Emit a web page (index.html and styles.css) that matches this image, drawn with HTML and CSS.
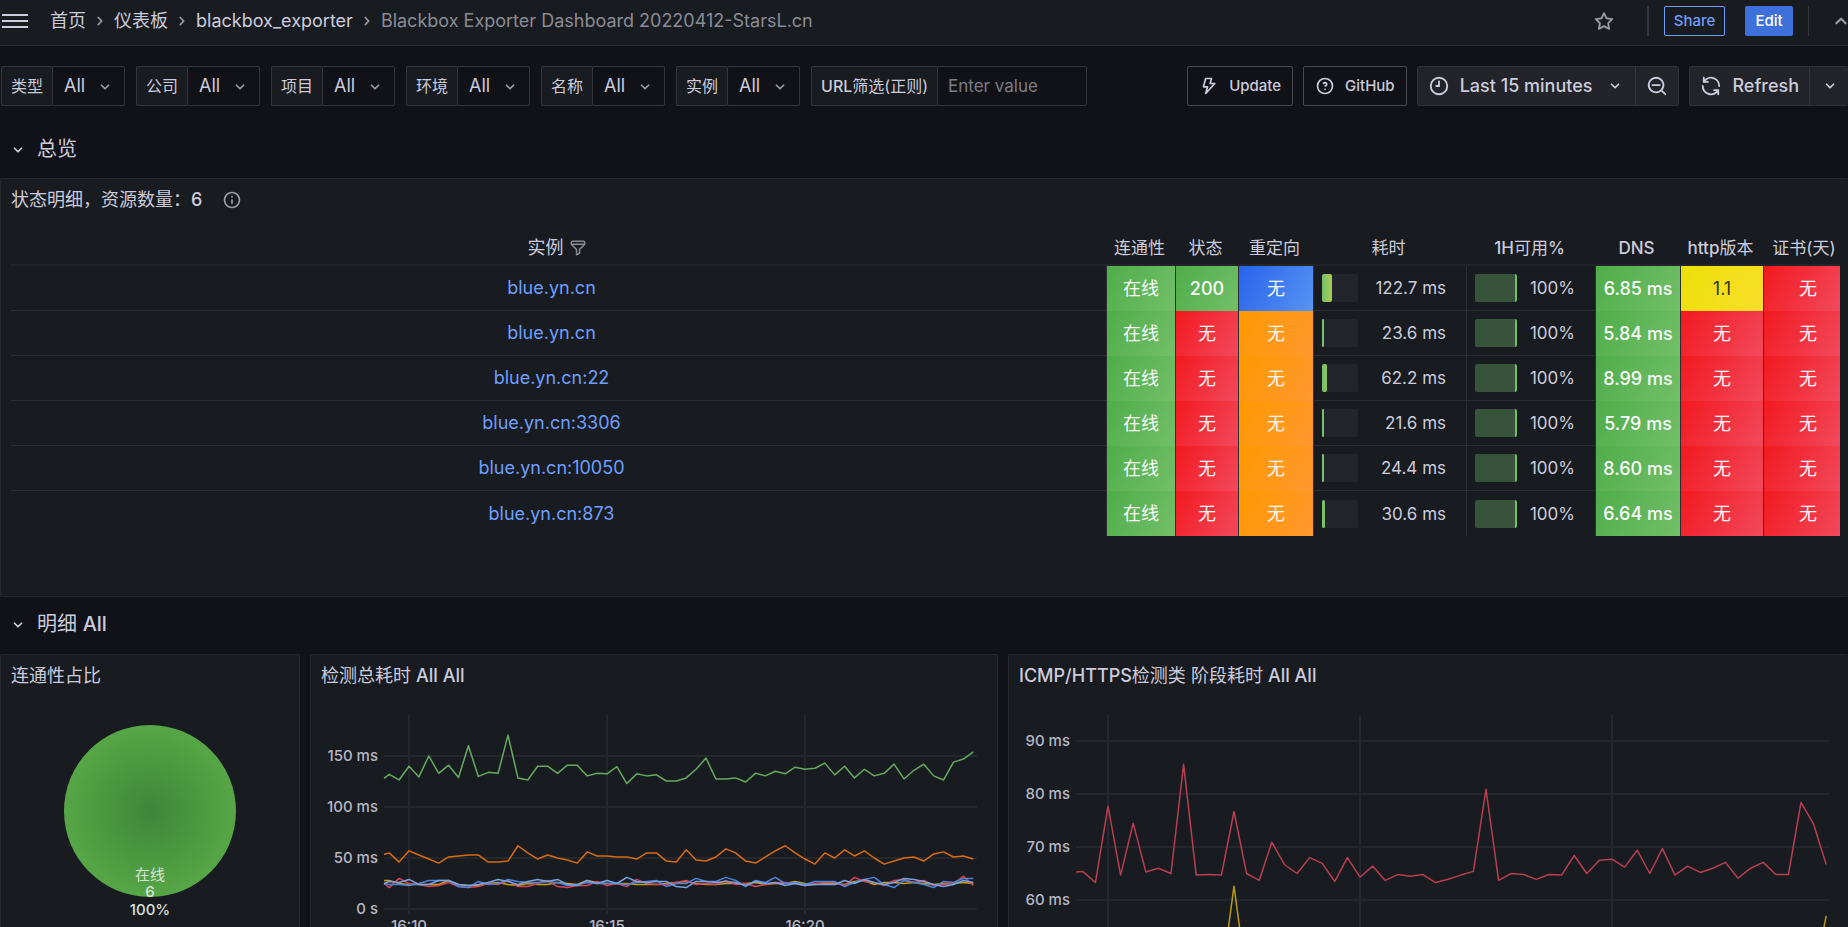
FILE: index.html
```html
<!DOCTYPE html>
<html lang="zh-CN">
<head>
  <meta charset="UTF-8">
  <meta name="viewport" content="width=device-width, initial-scale=1.0">
  <title>Blackbox Exporter Dashboard</title>
  <link rel="stylesheet" href="styles.css">
</head>
<body>
  <svg class="sprite" aria-hidden="true">
    <symbol id="i-down" viewBox="0 0 24 24"><path d="M17,9.17a1,1,0,0,0-1.41,0L12,12.71,8.46,9.17a1,1,0,0,0-1.41,0,1,1,0,0,0,0,1.42l4.24,4.24a1,1,0,0,0,1.42,0L17,10.59A1,1,0,0,0,17,9.17Z"/></symbol>
    <symbol id="i-right" viewBox="0 0 24 24"><path d="M14.83,11.29,10.59,7.05a1,1,0,0,0-1.42,0,1,1,0,0,0,0,1.41L12.71,12,9.17,15.54a1,1,0,0,0,0,1.41,1,1,0,0,0,1.42,0l4.24-4.24A1,1,0,0,0,14.83,11.29Z"/></symbol>
    <symbol id="i-star" viewBox="0 0 24 24"><path d="M22,9.67A1,1,0,0,0,21.14,9l-5.69-.83L12.9,3a1,1,0,0,0-1.8,0L8.55,8.16,2.86,9a1,1,0,0,0-.81.68,1,1,0,0,0,.25,1l4.13,4-1,5.68A1,1,0,0,0,6.9,21.44L12,18.77l5.1,2.67a.93.93,0,0,0,.46.12,1,1,0,0,0,.59-.19,1,1,0,0,0,.4-1l-1-5.68,4.13-4A1,1,0,0,0,22,9.67Zm-6.15,4a1,1,0,0,0-.29.88l.72,4.2-3.76-2a1.06,1.06,0,0,0-.94,0l-3.76,2,.72-4.2a1,1,0,0,0-.29-.88l-3-3,4.21-.61a1,1,0,0,0,.76-.55L12,5.7l1.88,3.82a1,1,0,0,0,.76.55l4.21.61Z"/></symbol>
    <symbol id="i-bolt" viewBox="0 0 24 24"><path d="M8 3h7l-1.600 6H19L8.100 21l2.100-8H5.300Z" fill="none" stroke="currentColor" stroke-width="2" stroke-linejoin="round"/></symbol>
    <symbol id="i-question" viewBox="0 0 24 24"><path d="M11.29,15.29a1.58,1.58,0,0,0-.12.15.76.76,0,0,0-.09.18.64.64,0,0,0-.06.18,1.36,1.36,0,0,0,0,.2.84.84,0,0,0,.08.38.9.9,0,0,0,.54.54.94.94,0,0,0,.76,0,.9.9,0,0,0,.54-.54A1,1,0,0,0,13,16a1,1,0,0,0-.29-.71A1,1,0,0,0,11.29,15.29ZM12,2A10,10,0,1,0,22,12,10,10,0,0,0,12,2Zm0,18a8,8,0,1,1,8-8A8,8,0,0,1,12,20ZM12,7A3,3,0,0,0,9.4,8.5a1,1,0,1,0,1.73,1A1,1,0,0,1,12,9a1,1,0,0,1,0,2,1,1,0,1,0,0,2,3,3,0,0,0,0-6Z"/></symbol>
    <symbol id="i-clock" viewBox="0 0 24 24"><g fill="none" stroke="currentColor" stroke-width="2" stroke-linecap="round"><circle cx="12" cy="12" r="9"/><path d="M12 7v5H9"/></g></symbol>
    <symbol id="i-zoomout" viewBox="0 0 24 24"><path d="M21.71,20.29,18,16.61A9,9,0,1,0,16.61,18l3.68,3.68a1,1,0,0,0,1.42,0A1,1,0,0,0,21.71,20.29ZM11,18a7,7,0,1,1,7-7A7,7,0,0,1,11,18Zm4-8H7a1,1,0,0,0,0,2h8a1,1,0,0,0,0-2Z"/></symbol>
    <symbol id="i-sync" viewBox="0 0 24 24"><path d="M19.91,15.51H15.38a1,1,0,0,0,0,2h2.4A8,8,0,0,1,4,12a1,1,0,1,0-2,0,10,10,0,0,0,16.88,7.23V21a1,1,0,0,0,2,0V16.5A1,1,0,0,0,19.91,15.51ZM12,2A10,10,0,0,0,5.12,4.77V3a1,1,0,0,0-2,0V7.5a1,1,0,0,0,1,1h4.5a1,1,0,0,0,0-2H6.22A8,8,0,0,1,20,12a1,1,0,0,0,2,0A10,10,0,0,0,12,2Z"/></symbol>
    <symbol id="i-info" viewBox="0 0 24 24"><path d="M12,2A10,10,0,1,0,22,12,10,10,0,0,0,12,2Zm0,18a8,8,0,1,1,8-8A8,8,0,0,1,12,20Zm0-9a1,1,0,0,0-1,1v4a1,1,0,0,0,2,0V12A1,1,0,0,0,12,11Zm0-4a1.200,1.200,0,1,0,1.200,1.200A1.200,1.200,0,0,0,12,7Z"/></symbol>
    <symbol id="i-filter" viewBox="0 0 24 24"><path d="M19,2H5A3,3,0,0,0,2,5V6.17a3,3,0,0,0,.25,1.2l0,.06a2.81,2.81,0,0,0,.59.86L9,14.41V21a1,1,0,0,0,.47.85A1,1,0,0,0,10,22a1,1,0,0,0,.45-.11l4-2A1,1,0,0,0,15,19V14.41l6.12-6.12a2.81,2.81,0,0,0,.59-.86l0-.06A3,3,0,0,0,22,6.17V5A3,3,0,0,0,19,2ZM13.29,13.29A1,1,0,0,0,13,14v4.38l-2,1V14a1,1,0,0,0-.29-.71L5.41,8H18.59ZM20,6H4V5A1,1,0,0,1,5,4H19a1,1,0,0,1,1,1Z"/></symbol>
  </svg>

  <header class="topbar">
    <button class="menu" aria-label="Menu"><span></span><span></span><span></span></button>
    <nav class="crumbs">
      <a href="#">首页</a>
      <svg class="icon sep"><use href="#i-right"/></svg>
      <a href="#">仪表板</a>
      <svg class="icon sep"><use href="#i-right"/></svg>
      <a href="#">blackbox_exporter</a>
      <svg class="icon sep"><use href="#i-right"/></svg>
      <span class="current">Blackbox Exporter Dashboard 20220412-StarsL.cn</span>
    </nav>
    <div class="actions">
      <button class="star" aria-label="Star"><svg class="icon"><use href="#i-star"/></svg></button>
      <span class="divider wide"></span>
      <button class="share">Share</button>
      <button class="edit">Edit</button>
      <span class="divider"></span>
      <button class="collapse" aria-label="Collapse"><svg class="icon"><use href="#i-down"/></svg></button>
    </div>
  </header>

  <div class="controls">
    <div class="var"><label for="v1">类型</label><div class="pick"><select id="v1"><option>All</option></select><svg class="icon"><use href="#i-down"/></svg></div></div>
    <div class="var"><label for="v2">公司</label><div class="pick"><select id="v2"><option>All</option></select><svg class="icon"><use href="#i-down"/></svg></div></div>
    <div class="var"><label for="v3">项目</label><div class="pick"><select id="v3"><option>All</option></select><svg class="icon"><use href="#i-down"/></svg></div></div>
    <div class="var"><label for="v4">环境</label><div class="pick"><select id="v4"><option>All</option></select><svg class="icon"><use href="#i-down"/></svg></div></div>
    <div class="var"><label for="v5">名称</label><div class="pick"><select id="v5"><option>All</option></select><svg class="icon"><use href="#i-down"/></svg></div></div>
    <div class="var"><label for="v6">实例</label><div class="pick"><select id="v6"><option>All</option></select><svg class="icon"><use href="#i-down"/></svg></div></div>
    <div class="var"><label for="url"><b>URL</b>筛选(正则)</label><input type="text" id="url" placeholder="Enter value"></div>

    <div class="tools">
      <a class="link-btn" href="#"><svg class="icon"><use href="#i-bolt"/></svg>Update</a>
      <a class="link-btn" href="#"><svg class="icon"><use href="#i-question"/></svg>GitHub</a>
      <div class="group">
        <button class="time"><svg class="icon big"><use href="#i-clock"/></svg>Last 15 minutes<svg class="icon caret"><use href="#i-down"/></svg></button>
        <button class="zoom" aria-label="Zoom out"><svg class="icon big"><use href="#i-zoomout"/></svg></button>
      </div>
      <div class="group last">
        <button class="refresh"><svg class="icon big"><use href="#i-sync"/></svg>Refresh</button>
        <button class="interval" aria-label="Interval"><svg class="icon"><use href="#i-down"/></svg></button>
      </div>
    </div>
  </div>

  <main>
    <h2 class="row-title"><svg class="icon"><use href="#i-down"/></svg>总览</h2>

    <section class="panel overview">
      <h3>状态明细，资源数量：<b>6</b><svg class="icon info"><use href="#i-info"/></svg></h3>
      <table>
        <colgroup>
          <col><col class="c-conn"><col class="c-code"><col class="c-redir"><col class="c-time"><col class="c-avail"><col class="c-dns"><col class="c-http"><col class="c-cert">
        </colgroup>
        <thead>
          <tr>
            <th class="first">实例<svg class="icon"><use href="#i-filter"/></svg></th>
            <th>连通性</th>
            <th>状态</th>
            <th>重定向</th>
            <th>耗时</th>
            <th><b>1H</b>可用<b>%</b></th>
            <th><b>DNS</b></th>
            <th><b>http</b>版本</th>
            <th class="cert">证书(天)</th>
          </tr>
        </thead>
        <tbody id="rows"></tbody>
      </table>
    </section>

    <h2 class="row-title"><svg class="icon"><use href="#i-down"/></svg><span>明细 <b>All</b></span></h2>

    <div class="grid">
      <section class="panel">
        <h3>连通性占比</h3>
        <svg class="chart" viewBox="0 0 298 280">
          <defs>
            <radialGradient id="pie"><stop offset="0" stop-color="#3f8639"/><stop offset="1" stop-color="#56a646"/></radialGradient>
          </defs>
          <circle cx="149" cy="111" r="86" fill="url(#pie)"/>
          <g class="pie-label">
            <text class="zh" x="149" y="180">在线</text>
            <text x="149" y="197">6</text>
            <text x="149" y="215">100%</text>
          </g>
        </svg>
      </section>
      <section class="panel">
        <h3><span>检测总耗时 <b>All All</b></span></h3>
        <svg class="chart" id="total" viewBox="0 0 686 280"></svg>
      </section>
      <section class="panel edge">
        <h3><span><b>ICMP/HTTPS</b>检测类 阶段耗时 <b>All All</b></span></h3>
        <svg class="chart" id="phase" viewBox="0 0 839 280"></svg>
      </section>
    </div>
  </main>

  <script src="dashboard.js"></script>
</body>
</html>
```
FILE: styles.css
```css
* {
  box-sizing: border-box;
}
body {
  margin: 0;
  height: 100vh;
  overflow: hidden;
  background: #111217;
  color: #ccccdc;
  font-family: Inter, "Noto Sans CJK SC", sans-serif;
  font-size: 18px;
  line-height: 24px;
}
button, input, select {
  font: inherit;
  color: inherit;
  margin: 0;
  padding: 0;
  border: 0;
  background: none;
}
a {
  color: inherit;
  text-decoration: none;
}
h2, h3 {
  margin: 0;
  font-weight: 400;
}
b {
  font-weight: 500;
}
.sprite {
  display: none;
}
.icon {
  width: 20px;
  height: 20px;
  flex: none;
  fill: currentColor;
}
.icon.big {
  width: 22px;
  height: 22px;
}

/* top bar */
.topbar {
  display: flex;
  align-items: center;
  height: 46px;
  padding: 0 0 4px 2px;
  background: #181b1f;
  border-bottom: 1px solid #2c2e33;
}
.menu {
  display: flex;
  flex-direction: column;
  gap: 4px;
  width: 26px;
  margin-right: 22px;
}
.menu span {
  height: 2px;
  background: #ccccdc;
}
.crumbs {
  display: flex;
  align-items: center;
}
.crumbs .sep {
  margin: 0 4px;
  color: #9a9ba5;
}
.current {
  color: #8a8b95;
}
.actions {
  display: flex;
  align-items: center;
  margin-left: auto;
  margin-right: -6px;
}
.star {
  display: flex;
  color: #9a9ba5;
  margin-right: 32px;
}
.star .icon {
  width: 22px;
  height: 22px;
}
.divider {
  width: 1px;
  height: 30px;
  background: #35373d;
}
.divider.wide {
  width: 2px;
}
.share, .edit {
  height: 30px;
  font-size: 15px;
  font-weight: 500;
  border-radius: 2px;
}
.share {
  width: 61px;
  margin: 0 20px 0 15px;
  border: 1px solid #6e9fff;
  color: #6e9fff;
}
.edit {
  width: 48px;
  margin-right: 15px;
  background: #3d71d9;
  color: #fff;
}
.collapse {
  display: flex;
  margin-left: 19px;
  color: #9a9ba5;
}
.collapse .icon {
  width: 26px;
  height: 26px;
  transform: rotate(180deg);
}

/* variables and time tools */
.controls {
  display: flex;
  gap: 11px;
  padding: 20px 0 20px 1px;
}
.var {
  display: flex;
  height: 40px;
}
.var label {
  padding: 0 9px;
  line-height: 38px;
  font-size: 16px;
  white-space: nowrap;
  background: #181b1f;
  border: 1px solid #35363c;
  border-right: 0;
  border-radius: 2px 0 0 2px;
}
.var select, .var input {
  height: 40px;
  border: 1px solid #35363c;
  border-radius: 2px;
}
.var select {
  width: 73px;
  padding-left: 11px;
  appearance: none;
}
.var input {
  width: 150px;
  padding-left: 10px;
  font-size: 17px;
}
.var input::placeholder {
  color: #7b7c86;
  opacity: 1;
}
.pick {
  position: relative;
}
.pick .icon {
  position: absolute;
  right: 10px;
  top: 11px;
  color: #9a9ba5;
  pointer-events: none;
}
.tools {
  display: flex;
  gap: 10px;
  margin-left: auto;
}
.link-btn {
  display: flex;
  align-items: center;
  gap: 10px;
  height: 40px;
  padding: 0 11px;
  border: 1px solid #48494f;
  border-radius: 2px;
  font-size: 15px;
  font-weight: 500;
}
.group {
  display: flex;
  height: 40px;
  font-weight: 500;
  background: #222429;
  border: 1px solid #2f3036;
  border-radius: 2px;
}
.group button {
  display: flex;
  align-items: center;
}
.time, .refresh {
  padding: 0 10px;
  gap: 10px;
}
.time .caret {
  margin-left: 3px;
}
.zoom, .interval {
  padding: 0 10px;
  border-left: 1px solid #35363c;
}
.group.last {
  border-right: 0;
}
.interval {
  padding-right: 8px;
}

/* dashboard rows */
.row-title {
  display: flex;
  align-items: center;
  gap: 9px;
  height: 46px;
  padding-left: 8px;
  font-size: 20px;
}
.row-title .icon {
  margin-top: 2px;
}
.panel {
  min-width: 0;
  background: #181b1f;
  border: 1px solid #25272c;
  border-radius: 2px;
}
.panel h3 {
  display: flex;
  align-items: center;
  height: 42px;
  padding-left: 10px;
  font-size: 18px;
  white-space: nowrap;
}
.info {
  margin-left: 20px;
  color: #9a9ba5;
}
.overview {
  border-right: 0;
  margin-top: 6px;
  margin-bottom: 4px;
  padding: 0 8px 60px 0;
}
.overview h3 {
  margin-bottom: 9px;
}

/* status table */
table {
  width: calc(100% - 10px);
  margin-left: 10px;
  table-layout: fixed;
  border-spacing: 0;
  text-align: center;
}
.c-conn { width: 69px; }
.c-code { width: 63px; }
.c-redir { width: 75px; }
.c-time { width: 153px; }
.c-avail { width: 129px; }
.c-dns { width: 85px; }
.c-http { width: 83px; }
.c-cert { width: 76px; }
th {
  height: 36px;
  padding: 2px 10px 0 6px;
  font-size: 17px;
  font-weight: 400;
  white-space: nowrap;
  border-bottom: 2px solid #222429;
}
th.first {
  font-size: 18px;
}
th.cert {
  padding: 2px 0 0 4px;
}
th .icon {
  width: 18px;
  height: 18px;
  margin-left: 5px;
  vertical-align: -3px;
  color: #8a8b95;
}
td {
  height: 45px;
  padding: 0;
  border-right: 1px solid #2c2e33;
  border-bottom: 1px solid #2c2e33;
}
td:last-child {
  padding-left: 12px;
  border-right: 0;
}
tr:last-child td {
  border-bottom: 0;
}
td a {
  margin-right: 14px;
  color: #6e9fff;
}
td.fill {
  border-bottom: 0;
  color: #f7f8fa;
}
td.num {
  font-weight: 500;
}
.green { background: linear-gradient(120deg, #4fad4a, #73bf69); }
.red { background: linear-gradient(120deg, #f2191f, #f2495c); }
.orange { background: linear-gradient(120deg, #ff9900, #ff9830); }
.blue { background: linear-gradient(120deg, #2763eb, #5794f2); }
td.yellow {
  background: linear-gradient(120deg, #ece009, #fade2a);
  color: #33342c;
}
.gauge {
  display: flex;
  align-items: center;
  justify-content: space-between;
  padding: 0 20px 0 8px;
  font-size: 17px;
}
.track {
  width: 36px;
  height: 28px;
  border-radius: 2px;
  background: #22252b;
}
.bar {
  height: 28px;
  border-radius: 2px;
  background: linear-gradient(90deg, #73bf69, #b5d04e) left / 12px;
}
.full {
  width: 42px;
  height: 28px;
  border-radius: 2px;
  border-right: 2px solid #73bf69;
  background: #37543a;
}

/* charts */
.grid {
  display: grid;
  grid-template-columns: 300fr 688fr 840fr;
  gap: 10px;
  margin-top: 7px;
}
.grid .panel.edge {
  border-right: 0;
}
.chart {
  display: block;
  width: 100%;
  margin-top: 3px;
}
.pie-label {
  font-size: 15px;
  font-weight: 500;
  text-anchor: middle;
  fill: #d8e2d8;
}
.zh {
  font-weight: 400;
}
.axis {
  font-size: 15px;
  font-weight: 500;
  fill: #b6b7c5;
}
.y-label { text-anchor: end; }
.x-label { text-anchor: middle; }
.gridline {
  stroke: #24272b;
  stroke-width: 2;
}
.series {
  fill: none;
  stroke-width: 1.5;
  stroke-linejoin: round;
}
```
FILE: dashboard.js
```js
// name, status code, redirect, latency, bar px, dns, http version
const targets = [
  ["blue.yn.cn", "200", "blue", "122.7 ms", 10, "6.85 ms", "1.1"],
  ["blue.yn.cn", "无", "orange", "23.6 ms", 2, "5.84 ms", "无"],
  ["blue.yn.cn:22", "无", "orange", "62.2 ms", 5, "8.99 ms", "无"],
  ["blue.yn.cn:3306", "无", "orange", "21.6 ms", 2, "5.79 ms", "无"],
  ["blue.yn.cn:10050", "无", "orange", "24.4 ms", 2, "8.60 ms", "无"],
  ["blue.yn.cn:873", "无", "orange", "30.6 ms", 3, "6.64 ms", "无"]
];

document.getElementById("rows").innerHTML = targets.map(([name, code, redirect, time, bar, dns, http]) => `
  <tr>
    <td><a href="#">${name}</a></td>
    <td class="fill green">在线</td>
    <td class="fill ${code === "无" ? "red" : "green num"}">${code}</td>
    <td class="fill ${redirect}">无</td>
    <td><div class="gauge"><div class="track"><div class="bar" style="width: ${bar}px"></div></div>${time}</div></td>
    <td><div class="gauge"><div class="full"></div>100%</div></td>
    <td class="fill green num">${dns}</td>
    <td class="fill ${http === "无" ? "red" : "yellow"}">${http}</td>
    <td class="fill red">无</td>
  </tr>`).join("");

function draw(id, o) {
  const y = v => o.base - (v - o.min) * o.scale;
  // the fourth sample falls on 16:10
  const x = i => Math.max(o.left, o.ticks[0] + (i - 3) * o.step);
  let out = "";
  for (const t of o.ticks) {
    out += `<line class="gridline" x1="${t}" x2="${t}" y1="15" y2="${o.bottom}"/>`;
  }
  for (const [v, label] of o.labels) {
    out += `<line class="gridline" x1="${o.left}" x2="${o.right}" y1="${y(v)}" y2="${y(v)}"/>`;
    out += `<text class="axis y-label" x="${o.left - 6}" y="${y(v) + 5}">${label}</text>`;
  }
  (o.times || []).forEach((t, i) => {
    out += `<text class="axis x-label" x="${o.ticks[i]}" y="${o.bottom + 17}">${t}</text>`;
  });
  for (const [color, values] of o.series) {
    out += `<polyline class="series" stroke="${color}" points="${values.map((v, i) => x(i) + "," + y(v)).join(" ")}"/>`;
  }
  document.getElementById(id).innerHTML = out;
}

draw("total", {
  left: 73, right: 666, bottom: 214, base: 209, min: 0, scale: 1.02, step: 9.9,
  ticks: [98, 296, 494],
  times: ["16:10", "16:15", "16:20"],
  labels: [[150, "150 ms"], [100, "100 ms"], [50, "50 ms"], [0, "0 s"]],
  series: [
    ["#66aa5e", [128,132,126.5,140,129.5,150,133,141,129,160,130,134,133,170.5,128.5,126.5,140,140,133,141,141,130.5,133,132.5,139.5,123,132.5,130.5,131.5,125.5,125.5,128.5,137,148,127.5,127.5,128.5,124.5,133,130.5,135,132.5,139,137,138,143,131.5,140,128.5,137,130.5,133,142,127.5,136,142,130.5,126.5,144,147,154]],
    ["#c9a00c", [28,28,25,24,24,24,24,28,24,23,23,25,26,24,23,25,24,24,26,25,24,28,26,25,25,25,24,24,24,25,26,27,25,24,24,25,25,25,26,24,25,25,27,25,24,25,25,24,27,28,24,26,26,25,26,25,24,25,25,26,25]],
    ["#d6455a", [25,21,30,25,24,22,23,26,22,21,22,25,24,28,22,22,25,28,22,21,23,23,27,23,25,22,29,25,24,24,26,28,24,25,24,28,24,25,22,24,26,26,25,23,25,26,26,23,31,27,26,23,28,29,26,28,23,24,25,32,23]],
    ["#4d84dd", [25,24,24,23,25,28,28,28,22,21,27,24,25,29,27,26,26,27,26,23,24,26,25,25,25,24,26,27,28,22,25,25,30,27,27,31,28,22,28,26,31,25,26,24,27,27,27,22,26,29,31,24,21,28,26,24,21,27,26,30,30]],
    ["#7ba3e0", [25,27,26,29,24,24,28,28,24,23,24,26,29,27,24,27,29,27,29,24,23,28,25,28,25,31,27,26,27,27,22,21,27,27,26,27,26,23,27,25,26,23,25,23,24,24,24,28,25,29,26,24,26,30,29,27,24,22,24,28,26]],
    ["#d96b10", [53.5,55,46,57,53,49,45,51,52,53,53,46,46,47,62,55,49,53,50,48,45,56,52,52,51,51,49,55,55,47,46,58,48,47,51,59,55,47,45,51,57,62,55,49,44,55,50,58,52,57,50,44,47,50,51,47,54,56,51,52,49]]
  ]
});

const dns = new Array(61).fill(45);
dns[13] = 62.6;
dns[60] = 57;

draw("phase", {
  left: 67, right: 820, bottom: 260, base: 200, min: 60, scale: 5.3, step: 12.6,
  ticks: [99, 351, 603],
  labels: [[90, "90 ms"], [80, "80 ms"], [70, "70 ms"], [60, "60 ms"]],
  series: [
    ["#b83e50", [65.3,65.4,63.3,77.7,64.7,74.5,65.3,66,65,85.6,64.7,64.8,64.7,76.7,65,63.7,70.9,66.7,65,68,66.9,63.5,68,64.3,66.4,63.7,64.8,64.5,64.8,63.3,63.9,64.7,65.4,80.9,63.7,65,64.8,63.9,64.8,64.7,68.4,65,67.5,67.7,66.2,69.4,65,69.7,64.7,66.4,65.2,66,67.1,64.1,66,67.1,64.8,64.8,78.4,74.3,66.7]],
    ["#b89a12", dns]
  ]
});
```
